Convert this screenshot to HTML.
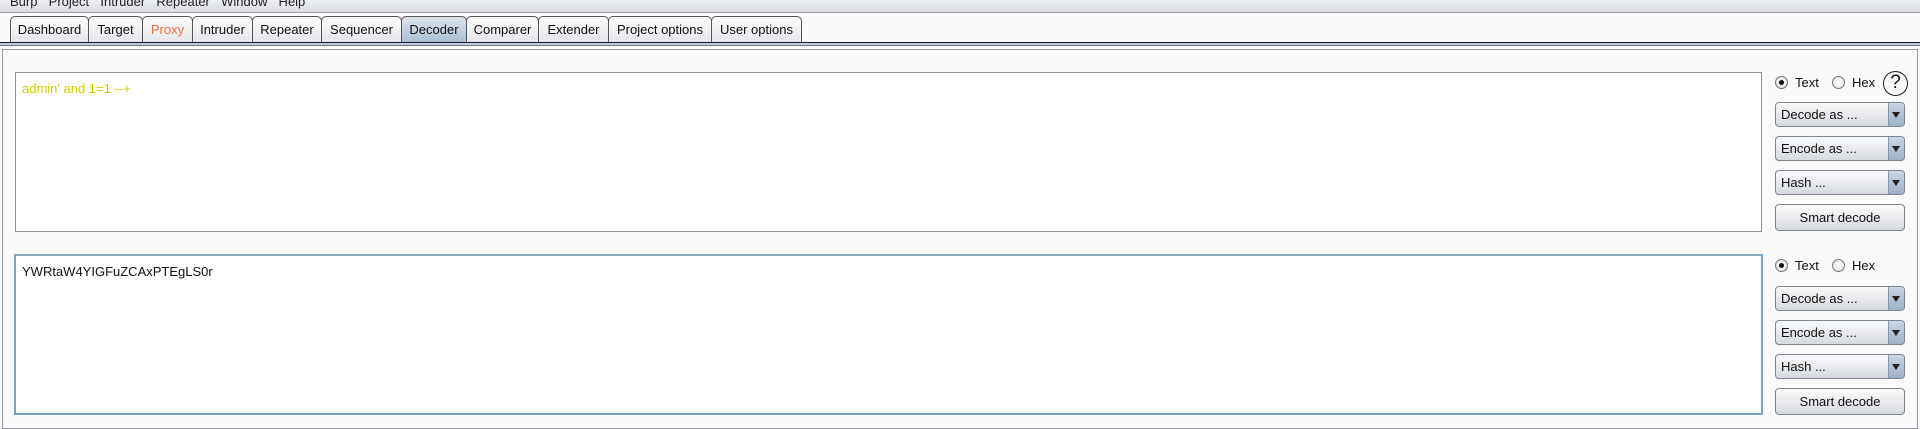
<!DOCTYPE html>
<html><head><style>
*{margin:0;padding:0;box-sizing:border-box}
body{width:1920px;height:425px;background:#fafafa;font-family:"Liberation Sans",Arial,sans-serif;font-size:13px;color:#111;position:relative;overflow:hidden}
.abs{position:absolute}
.menu{left:0;top:0;width:1920px;height:13px;background:linear-gradient(#eceef1,#d8dbe0);border-bottom:1px solid #a0a4aa;overflow:hidden}
.menu span{position:absolute;top:-6px;left:10px;font-size:13px;color:#222;word-spacing:2px}
.tab{top:16px;height:27px;border:1px solid #555;border-bottom:none;border-radius:5px 5px 0 0;background:linear-gradient(#fdfdfd,#e2e4e8);text-align:center;line-height:26px;font-size:13px}
.tab.sel{background:linear-gradient(#dde4ec,#a9bdd1)}
.line{left:0;width:1920px;top:42px;height:4px;background:#b8cde0;border-top:1px solid #1a1a2a;border-bottom:1px solid #777}
.panel{left:2px;top:49px;width:1916px;height:380px;border:1px solid #9a9da2;background:#fafafa}
.ta{background:#fff;border:1px solid #8e949a}
.ta2{border:2px solid #7aa3cc;border-top-color:#8aa9c8}
.radio{width:13px;height:13px;border-radius:50%;border:1px solid #777;background:radial-gradient(#fff,#dcdcdc)}
.radio.on::after{content:"";position:absolute;left:3px;top:3px;width:5px;height:5px;border-radius:50%;background:#111}
.dd{width:130px;height:25px;border:1px solid #7f858c;border-radius:4px;background:linear-gradient(#fafbfc,#d6d9de);font-size:13px;line-height:23px;padding-left:5px}
.dd::after{content:"";position:absolute;right:0;top:0;width:15px;height:23px;background:linear-gradient(#c9d6e3,#9db1c6);border-left:1px solid #8a96a3;border-radius:0 3px 3px 0}
.dd b{position:absolute;right:4px;top:9px;width:0;height:0;border-left:4px solid transparent;border-right:4px solid transparent;border-top:6px solid #222;z-index:2}
.btn{width:130px;height:27px;border:1px solid #7f858c;border-radius:4px;background:linear-gradient(#fafbfc,#d6d9de);text-align:center;line-height:25px;font-size:13px}
</style></head><body>
<div class="abs menu"><span>Burp&nbsp; Project&nbsp; Intruder&nbsp; Repeater&nbsp; Window&nbsp; Help</span></div>
<div class="abs tab" style="left:10px;width:79px">Dashboard</div>
<div class="abs tab" style="left:88px;width:55px">Target</div>
<div class="abs tab" style="left:142px;width:51px;color:#f07040">Proxy</div>
<div class="abs tab" style="left:192px;width:61px">Intruder</div>
<div class="abs tab" style="left:252px;width:70px">Repeater</div>
<div class="abs tab" style="left:321px;width:81px">Sequencer</div>
<div class="abs tab sel" style="left:401px;width:66px">Decoder</div>
<div class="abs tab" style="left:466px;width:73px">Comparer</div>
<div class="abs tab" style="left:538px;width:71px">Extender</div>
<div class="abs tab" style="left:608px;width:104px">Project options</div>
<div class="abs tab" style="left:711px;width:91px">User options</div>
<div class="abs line"></div>
<div class="abs panel"></div>

<div class="abs ta" style="left:15px;top:72px;width:1747px;height:160px"></div>
<div class="abs" style="left:22px;top:81px;color:#d4cc00;font-size:13px">admin' and 1=1 --+</div>
<div class="abs radio on" style="left:1775px;top:76px"></div>
<div class="abs" style="left:1795px;top:75px">Text</div>
<div class="abs radio" style="left:1832px;top:76px"></div>
<div class="abs" style="left:1852px;top:75px">Hex</div>
<div class="abs" style="left:1883px;top:71px;width:25px;height:25px;border:1.5px solid #222;border-radius:50%;text-align:center;line-height:22px;font-size:19px">?</div>
<div class="abs dd" style="left:1775px;top:102px">Decode as ...<b></b></div>
<div class="abs dd" style="left:1775px;top:136px">Encode as ...<b></b></div>
<div class="abs dd" style="left:1775px;top:170px">Hash ...<b></b></div>
<div class="abs btn" style="left:1775px;top:204px">Smart decode</div>

<div class="abs ta ta2" style="left:14px;top:254px;width:1749px;height:161px"></div>
<div class="abs" style="left:22px;top:264px;color:#111;font-size:13px">YWRtaW4YIGFuZCAxPTEgLS0r</div>
<div class="abs radio on" style="left:1775px;top:259px"></div>
<div class="abs" style="left:1795px;top:258px">Text</div>
<div class="abs radio" style="left:1832px;top:259px"></div>
<div class="abs" style="left:1852px;top:258px">Hex</div>
<div class="abs dd" style="left:1775px;top:286px">Decode as ...<b></b></div>
<div class="abs dd" style="left:1775px;top:320px">Encode as ...<b></b></div>
<div class="abs dd" style="left:1775px;top:354px">Hash ...<b></b></div>
<div class="abs btn" style="left:1775px;top:388px">Smart decode</div>
</body></html>
